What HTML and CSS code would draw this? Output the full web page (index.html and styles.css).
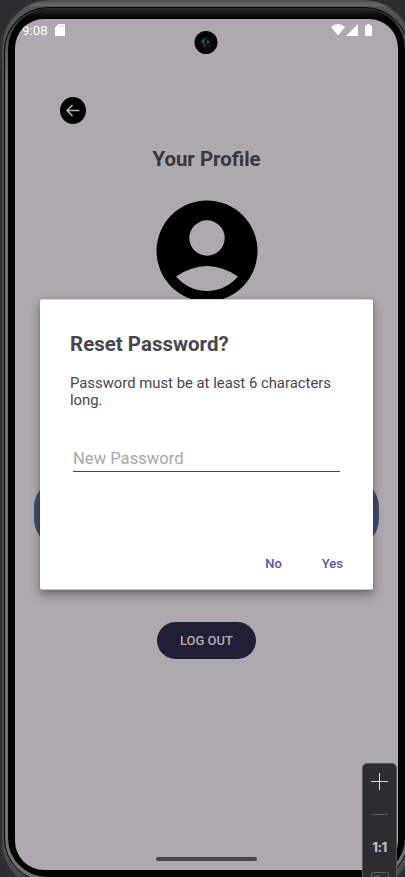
FILE: index.html
```html
<!DOCTYPE html>
<html lang="en">
<head>
<meta charset="utf-8">
<title>Your Profile</title>
<link rel="stylesheet" href="styles.css">
</head>
<body>
<div class="device">
  <div class="rim">
    <div class="bezel">
      <main class="screen">
        <header class="status">
          <span class="clock">9:08</span>
          <svg class="sd" width="10" height="12" viewBox="0 0 10 12"><path fill="#fff" d="M3.5 0H9a1 1 0 0 1 1 1v10a1 1 0 0 1-1 1H1a1 1 0 0 1-1-1V3.500z"/><path stroke="#aaa5aa" stroke-width=".6" d="M4.500 1.500v1.500M6.500 1.500v1.500M8.300 1.500v1.500"/></svg>
          <svg class="signals" width="42" height="12" viewBox="0 0 42 12" fill="#fff"><path d="M0 3Q7-3 14 3L7 11.500z"/><path d="M27 0v12H15z"/><path d="M34 1.500h2V0h3v1.500h2V12h-7z"/></svg>
        </header>
        <button class="back" aria-label="Back"><svg width="26" height="27" viewBox="0 0 26 27"><ellipse cx="13" cy="13.500" rx="13" ry="13.500"/><path d="M19.500 13.500H7M12.500 8l-5.500 5.500 5.500 5.500" fill="none" stroke="#bbb8b8" stroke-width="1.500"/></svg></button>
        <h1>Your Profile</h1>
        <svg class="avatar" width="102" height="102" viewBox="0 0 102 102"><circle cx="51" cy="51" r="50.500"/><circle cx="51" cy="38" r="17.700" fill="#aea9ae"/><path d="M20 76.500Q51 55.500 82 76.500Q69 91 51 91Q33 91 20 76.500z" fill="#aea9ae"/></svg>
        <div class="panel"></div>
        <button class="logout">LOG OUT</button>
        <div class="home"></div>
      </main>
    </div>
  </div>
</div>
<div class="camera"><svg width="24" height="24" viewBox="0 0 24 24"><circle cx="12" cy="11.500" r="11.500" fill="#050505"/><circle cx="12" cy="12" r="6" fill="#111217"/><path d="M7.500 12q0-4 4-4-2 2-1 5z" fill="#34515e"/><path d="M13 9.500q3 0 2 2l-2 2z" fill="#544065"/><circle cx="10.500" cy="14.500" r="1" fill="#3c5870"/></svg></div>
<section class="dialog" role="dialog">
  <h2>Reset Password?</h2>
  <p>Password must be at least 6 characters long.</p>
  <div class="field">New Password</div>
  <div class="actions"><span>No</span><span>Yes</span></div>
</section>
<aside class="zoom">
  <svg width="17" height="17" viewBox="0 0 17 17"><path d="M8.500 0v17M0 8.500h17" stroke="#dcdde0"/></svg>
  <div class="minus"></div>
  <span class="ratio">1:1</span>
  <svg class="fit" width="18" height="16" viewBox="0 0 18 16" fill="none" stroke="#626468"><rect x=".5" y=".5" width="17" height="15" rx="2"/><path d="M4 9V4h5"/></svg>
</aside>
</body>
</html>
```
FILE: styles.css
```css
* { box-sizing: border-box; }
html { height: 100%; overflow: hidden; }
body {
  position: relative;
  height: 877px;
  margin: 0;
  overflow: hidden;
  background: #2c2d32;
  font-family: Roboto, sans-serif;
}
svg { display: block; flex: none; }
button { display: block; padding: 0; border: 0; background: none; font: inherit; }

.device {
  width: 413px;
  height: 890px;
  padding: 7px 4px 8px;
  border-radius: 49px;
  background: linear-gradient(#484948, #6b6c6a 5px, #545553 7px, #4b4c4a 60px);
  box-shadow: inset 2px 0 0 #30312f, inset -1px 0 0 #30312f;
}
.rim {
  height: 100%;
  padding: 2px 3px 4px;
  border: 1px solid #080808;
  border-radius: 44px;
  background: linear-gradient(#252625 2px, #555653 35px, #727370 80px);
}
.bezel {
  height: 100%;
  padding: 9px 7px 6px;
  border-radius: 39px;
  background: linear-gradient(#202020, #000 9px);
}
.screen {
  display: flex;
  flex-direction: column;
  align-items: center;
  width: 383px;
  height: 851px;
  border-radius: 29px;
  overflow: hidden;
  background: #aea9ae;
}
.status {
  display: flex;
  flex: none;
  align-self: stretch;
  height: 24px;
  padding: 5px 25px 0 7px;
}
.clock {
  width: 33px;
  color: #fff;
  font-size: 13.3px;
  line-height: 14px;
}
.signals { margin-left: auto; }
.back { align-self: flex-start; margin: 54px 0 0 45px; }
h1 {
  margin: 23px 0 0;
  color: #39373c;
  font-size: 20.4px;
  line-height: 24px;
  font-weight: 700;
}
.avatar { margin-top: 29px; }
.panel {
  flex: none;
  width: 345px;
  height: 68px;
  margin-top: 177px;
  border-radius: 28px;
  background: #454b6d;
}
.logout {
  flex: none;
  width: 99px;
  height: 37px;
  margin-top: 75px;
  border-radius: 19px;
  background: #1f2036;
  color: #aeaaaf;
  font-size: 13px;
  font-weight: 500;
}
.home {
  width: 101px;
  height: 4px;
  margin: auto 0 9px;
  border-radius: 2px;
  background: #484548;
}
.camera { position: absolute; left: 194px; top: 31px; }

.dialog {
  position: absolute;
  left: 40px;
  top: 299px;
  width: 333px;
  height: 291px;
  padding: 32px 30px 0;
  border-top: 1px solid #d6d3d6;
  border-bottom: 1px solid #c8c6c8;
  border-radius: 2px;
  background: #fff;
  box-shadow: 0 5px 11px rgba(0, 0, 0, .32), 0 1px 4px rgba(0, 0, 0, .16);
  color: #49454f;
}
h2 {
  margin: 0;
  font-size: 20.5px;
  line-height: 24px;
  font-weight: 700;
}
p {
  margin: 19px 0 0;
  font-size: 14.85px;
  line-height: 17px;
}
.field {
  height: 32px;
  margin: 31px 3px 0;
  padding-top: 9px;
  border-bottom: 1px solid #49474e;
  color: #a7a7a7;
  font-size: 16.6px;
  line-height: 20px;
}
.actions {
  display: flex;
  justify-content: flex-end;
  gap: 40px;
  margin-top: 84px;
  color: #6750a4;
  font-size: 13px;
  line-height: 16px;
  font-weight: 500;
}
.zoom {
  position: absolute;
  left: 362px;
  top: 763px;
  display: flex;
  flex-direction: column;
  align-items: center;
  width: 35px;
  height: 130px;
  padding-top: 9px;
  border: 1px solid #57585c;
  border-radius: 5px;
  background: #2b2d30;
}
.minus { width: 17px; height: 1px; margin-top: 24px; background: #5b5d61; }
.ratio {
  margin-top: 24px;
  color: #b8babf;
  font: 800 13px/16px Inter, sans-serif;
  letter-spacing: -.5px;
}
.fit { margin-top: 17px; }
```
